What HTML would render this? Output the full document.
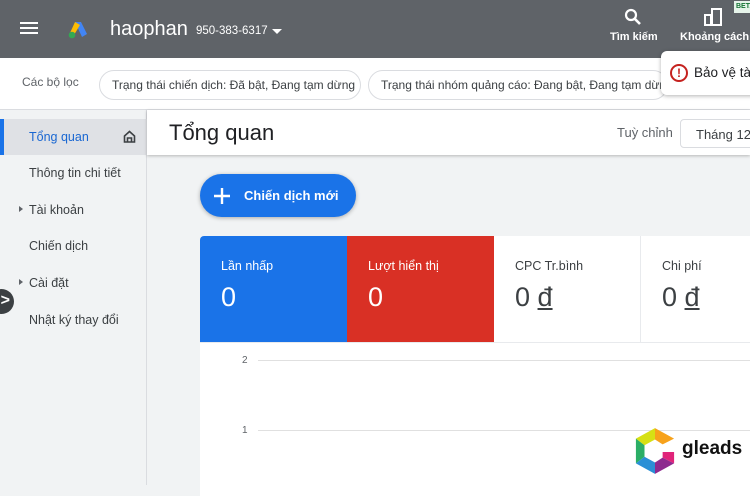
<!DOCTYPE html>
<html><head><meta charset="utf-8"><style>
*{box-sizing:border-box;margin:0;padding:0}
body{width:750px;height:485px;overflow:hidden;font-family:"Liberation Sans",sans-serif;background:#f1f3f4;position:relative;color:#3c4043}
.abs{position:absolute}
#hdr{left:0;top:0;width:750px;height:58px;background:#5f6368;color:#fff}
#flt{left:0;top:58px;width:750px;height:52px;background:#fff;border-bottom:1px solid #dadce0}
.chip{position:absolute;top:12px;height:30px;border:1px solid #dadce0;border-radius:15px;font-size:12px;line-height:28px;padding:0 12px;color:#3c4043;white-space:nowrap;overflow:hidden}
#side{left:0;top:110px;width:147px;height:375px;background:#f1f3f4;border-right:1px solid #dadce0}
.nav{position:absolute;left:29px;font-size:12.5px;color:#3c4043}
#title{left:147px;top:110px;width:603px;height:45px;background:#fff;box-shadow:0 1px 3px rgba(0,0,0,.25)}
.tile{position:absolute;top:236px;height:106px;width:147px;padding:23px 0 0 21px;font-size:12.5px}
.tile .v{font-size:27px;margin-top:9px}
</style></head><body>
<div id="hdr" class="abs">
 <div class="abs" style="left:20px;top:22px;width:18px;height:2px;background:#fff;box-shadow:0 5px 0 #fff,0 10px 0 #fff"></div>
 <svg class="abs" style="left:67px;top:20px" width="22" height="20" viewBox="0 0 22 20"><path d="M8 2 L14 2 L20 14 L15 17 Z" fill="#4285f4"/><path d="M8 2 L13 5 L7 15 L3 13 Z" fill="#fbbc04"/><circle cx="5" cy="15" r="3.3" fill="#34a853"/></svg>
 <div class="abs" style="left:110px;top:18px;font-size:20px">haophan</div>
 <div class="abs" style="left:196px;top:25px;font-size:11.5px">950-383-6317</div>
 <div class="abs" style="left:272px;top:29px;border:5px solid transparent;border-top:5px solid #fff"></div>
 <svg class="abs" style="left:624px;top:8px" width="18" height="18" viewBox="0 0 18 18"><circle cx="7" cy="7" r="5" stroke="#fff" stroke-width="2.2" fill="none"/><path d="M10.5 10.5 L16 16" stroke="#fff" stroke-width="2.6"/></svg>
 <div class="abs" style="left:610px;top:31px;font-size:11px;font-weight:bold">Tìm kiếm</div>
 <svg class="abs" style="left:704px;top:8px" width="18" height="18" viewBox="0 0 18 18"><path d="M1 7h6v10H1zM8 1h9v16H8z" fill="none" stroke="#fff" stroke-width="2"/></svg>
 <div class="abs" style="left:680px;top:31px;font-size:11px;font-weight:bold">Khoảng cách</div>
 <div class="abs" style="left:734px;top:1px;width:20px;height:12px;background:#e6f4ea;color:#137333;font-size:7px;font-weight:bold;padding:2px">BETA</div>
</div>
<div id="flt" class="abs">
 <div class="abs" style="left:22px;top:17px;font-size:12px;color:#5f6368">Các bộ lọc</div>
 <div class="chip" style="left:99px;width:262px">Trạng thái chiến dịch: Đã bật, Đang tạm dừng</div>
 <div class="chip" style="left:368px;width:300px">Trạng thái nhóm quảng cáo: Đang bật, Đang tạm dừng</div>
</div>
<div class="abs" style="left:661px;top:51px;width:100px;height:44px;background:#fff;border-radius:6px 0 0 6px;box-shadow:0 1px 4px rgba(0,0,0,.3)">
 <div class="abs" style="left:9px;top:13px;width:18px;height:18px;border:2px solid #c5221f;border-radius:50%;color:#c5221f;font-size:12px;font-weight:bold;text-align:center;line-height:14px">!</div>
 <div class="abs" style="left:33px;top:14px;font-size:13.5px;color:#202124;white-space:nowrap">Bảo vệ tà</div>
</div>
<div id="side" class="abs">
 <div class="abs" style="left:0;top:9px;width:147px;height:36px;background:#dfe1e5"></div>
 <div class="abs" style="left:0;top:9px;width:4px;height:36px;background:#1a73e8"></div>
 <div class="nav" style="top:20px;color:#1967d2">Tổng quan</div>
 <svg class="abs" style="left:123px;top:20px" width="13" height="13" viewBox="0 0 13 13"><path d="M1.5 6 L6.5 1.5 L11.5 6 V12 H1.5 Z M4.5 12 V8 H8.5 V12" fill="none" stroke="#3c4043" stroke-width="1.6"/></svg>
 <div class="nav" style="top:56px">Thông tin chi tiết</div>
 <div class="abs" style="left:19px;top:96px;border:3px solid transparent;border-left:4px solid #5f6368"></div>
 <div class="nav" style="top:93px">Tài khoản</div>
 <div class="nav" style="top:129px">Chiến dịch</div>
 <div class="abs" style="left:19px;top:169px;border:3px solid transparent;border-left:4px solid #5f6368"></div>
 <div class="nav" style="top:166px">Cài đặt</div>
 <div class="nav" style="top:203px">Nhật ký thay đổi</div>
 <div class="abs" style="left:-11px;top:179px;width:25px;height:25px;border-radius:50%;background:#3c4043;color:#fff;font-size:16px;font-weight:bold;line-height:24px;text-align:right;padding-right:4px">&gt;</div>
</div>
<div id="title" class="abs">
 <div class="abs" style="left:22px;top:10px;font-size:22px;color:#202124">Tổng quan</div>
 <div class="abs" style="left:470px;top:15px;font-size:13px;color:#5f6368">Tuỳ chỉnh</div>
 <div class="abs" style="left:533px;top:9px;width:90px;height:29px;border:1px solid #dadce0;border-radius:4px;font-size:13px;padding:7px 15px;color:#3c4043">Tháng 12</div>
</div>
<div class="abs" style="left:200px;top:174px;width:156px;height:43px;border-radius:22px;background:#1a73e8;color:#fff;box-shadow:0 1px 4px rgba(0,0,0,.3)">
 <svg class="abs" style="left:14px;top:14px" width="16" height="16" viewBox="0 0 16 16"><path d="M8 0V16M0 8H16" stroke="#fff" stroke-width="2.4"/></svg>
 <div class="abs" style="left:44px;top:14px;font-size:13px;font-weight:bold">Chiến dịch mới</div>
</div>
<div class="abs" style="left:200px;top:236px;width:560px;height:260px;background:#fff;border-radius:4px 0 0 0;overflow:hidden">
 <div class="abs" style="left:0;top:106px;width:560px;height:1px;background:#e8eaed"></div>
</div>
<div class="tile" style="left:200px;background:#1a73e8;color:#fff;border-radius:4px 0 0 0">Lần nhấp<div class="v">0</div></div>
<div class="tile" style="left:347px;background:#d93025;color:#fff">Lượt hiển thị<div class="v">0</div></div>
<div class="tile" style="left:494px;color:#3c4043;border-right:1px solid #e8eaed">CPC Tr.bình<div class="v">0 <u>đ</u></div></div>
<div class="tile" style="left:641px;color:#3c4043">Chi phí<div class="v">0 <u>đ</u></div></div>
<div class="abs" style="left:242px;top:355px;font-size:10px;color:#5f6368">2</div>
<div class="abs" style="left:258px;top:360px;width:500px;height:1px;background:#e0e0e0"></div>
<div class="abs" style="left:242px;top:425px;font-size:10px;color:#5f6368">1</div>
<div class="abs" style="left:258px;top:430px;width:500px;height:1px;background:#e0e0e0"></div>
<svg class="abs" style="left:634px;top:427px" width="42" height="48" viewBox="0 0 44 50"><path d="M22 1 L42 12 L30 18 L22 13 Z" fill="#f7a21b"/><path d="M22 1 L22 13 L11 19 L2 12 Z" fill="#d6e014"/><path d="M2 12 L11 19 L11 31 L2 38 Z" fill="#2bae66"/><path d="M2 38 L11 31 L22 37 L22 49 Z" fill="#2a8fd6"/><path d="M22 49 L22 37 L30 32 L42 38 Z" fill="#8e2a8f"/><path d="M42 38 L30 32 L30 26 L42 26 Z" fill="#e0247a"/></svg>
<div class="abs" style="left:682px;top:438px;font-size:19px;font-weight:bold;color:#111">gleads</div>
</body></html>
